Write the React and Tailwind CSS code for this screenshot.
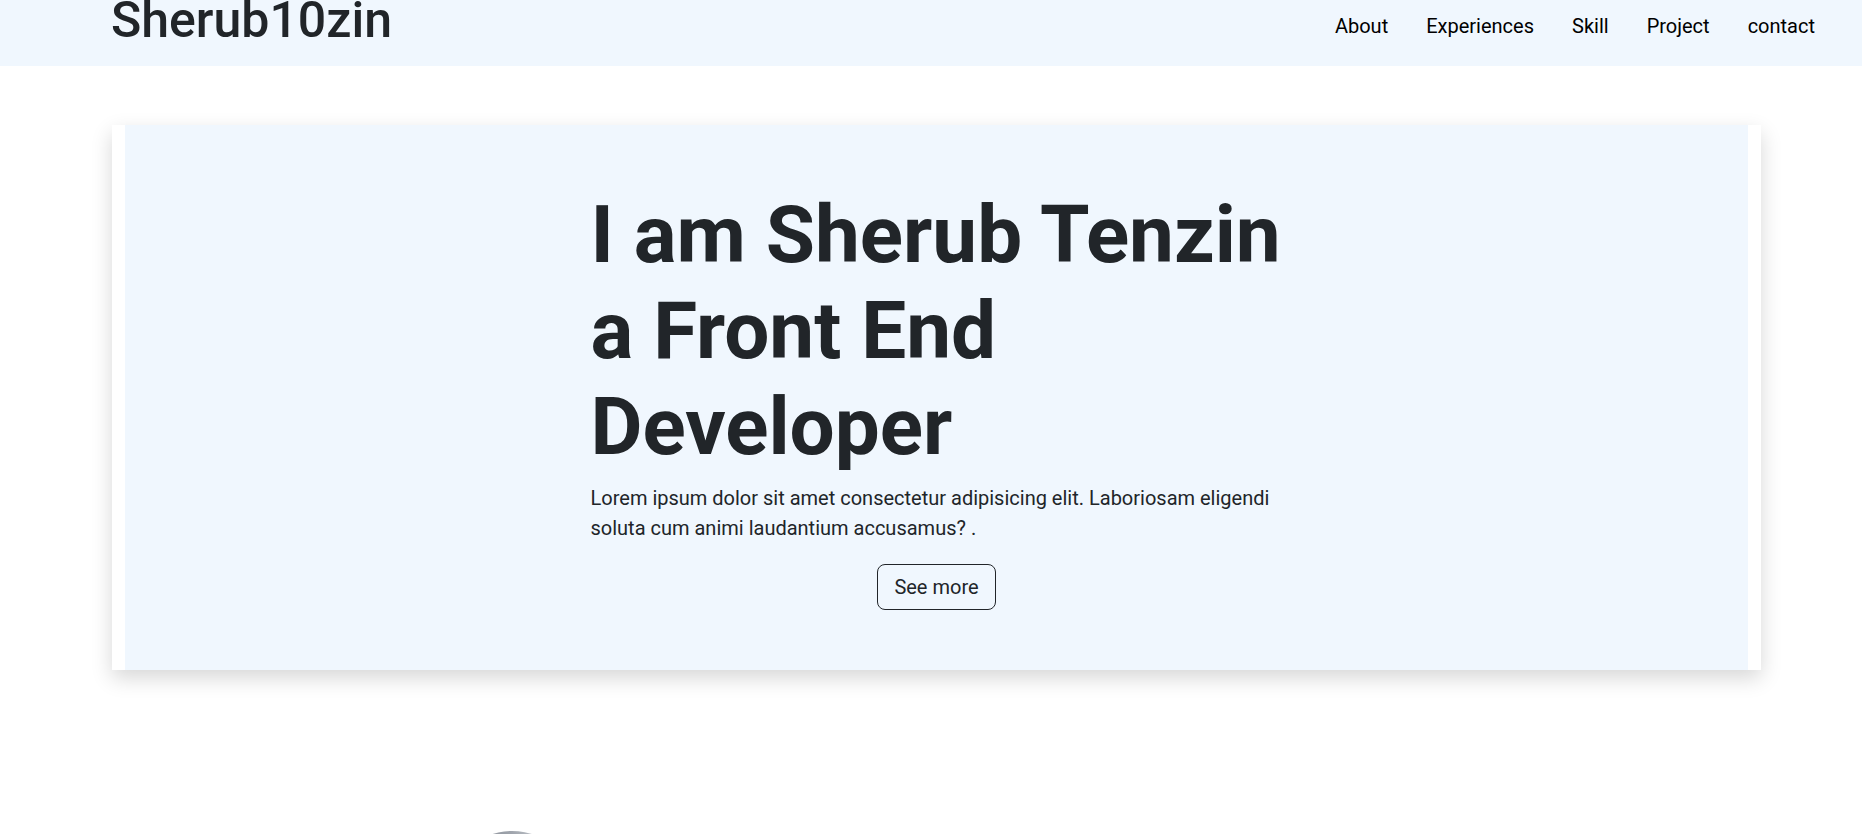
export default function App() {
  const links = ["About", "Experiences", "Skill", "Project", "contact"];
  return (
    <div className="min-h-screen bg-white text-[#212529]" style={{ fontFamily: "Roboto, 'Liberation Sans', sans-serif" }}>
      <header className="h-[66px] bg-[#f0f7fe] flex items-start justify-between pl-[111px] pr-[47px] overflow-hidden">
        <div className="text-[50px] leading-[1.2] font-medium mt-[-10px] text-[#212529]">Sherub10zin</div>
        <nav className="mt-[11px]">
          <ul className="flex gap-[38px] text-[20px] leading-[30px] text-black">
            {links.map((l) => (
              <li key={l}>
                <a href="#" className="text-black">{l}</a>
              </li>
            ))}
          </ul>
        </nav>
      </header>

      <main className="pt-[59px]">
        <section className="ml-[112px] w-[1649px] bg-white px-[13px] shadow-[0_8px_20px_rgba(0,0,0,0.16)]">
          <div className="bg-[#f0f7fe] flex flex-col items-center pt-[62px] pb-[60px]">
            <div className="w-[692px]">
              <h1 className="text-[80px] leading-[1.2] font-bold text-[#212529] mb-[8px]">
                I am Sherub Tenzin a Front End Developer
              </h1>
              <p className="text-[20px] leading-[30px] text-[#212529]">
                Lorem ipsum dolor sit amet consectetur adipisicing elit. Laboriosam eligendi soluta cum animi laudantium accusamus? .
              </p>
              <div className="flex justify-center mt-[21px]">
                <button className="h-[46px] px-[16px] border border-[#212529] rounded-[8px] text-[20px] leading-[30px] text-[#212529] bg-transparent">
                  See more
                </button>
              </div>
            </div>
          </div>
        </section>

        <section className="mt-[161px] pl-[447px]">
          <div className="w-[130px] h-[130px] rounded-full bg-[radial-gradient(circle_at_40%_10%,#8a9099,#d3d6db_40%,#f2f3f5_70%)]"></div>
        </section>
      </main>
    </div>
  );
}
